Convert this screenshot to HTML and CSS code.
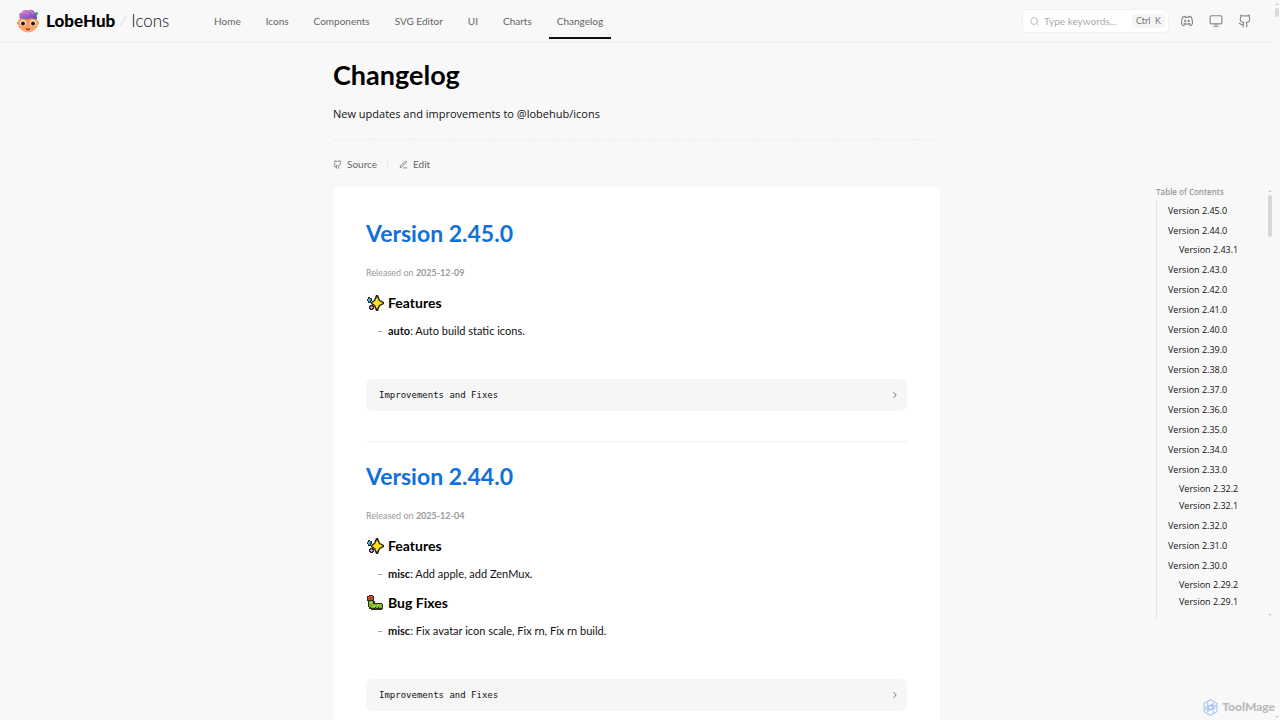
FILE: index.html
```
<!DOCTYPE html>
<html lang="en">
<head>
    <meta charset="UTF-8">
    <meta name="viewport" content="width=device-width, initial-scale=1.0">
    <title>Changelog - LobeHub Icons</title>
    <link rel="stylesheet" href="styles.css">
</head>
<body>
    <!-- shared icons -->
    <svg class="sprite" aria-hidden="true">
        <symbol id="github" viewBox="0 0 24 24">
            <path d="M15 22v-4a4.8 4.8 0 0 0-1-3.5c3 0 6-2 6-5.5.08-1.25-.27-2.48-1-3.5.28-1.15.28-2.35 0-3.5 0 0-1 0-3 1.5-2.64-.5-5.36-.5-8 0C6 2 5 2 5 2c-.3 1.15-.3 2.35 0 3.5A5.403 5.403 0 0 0 4 9c0 3.500 3 5.500 6 5.500-.39.49-.68 1.050-.85 1.650-.17.6-.22 1.230-.15 1.850v4"/>
            <path d="M9 18c-4.510 2-5-2-7-2"/>
        </symbol>
        <symbol id="sparkles" viewBox="0 0 18 18">
            <path d="M1 5h1V3h2v1h2v3H5v2H2V7H1z" fill="#223338"/>
            <path d="M2 5h1V4h1v1h1v1H4v2H3V7H2z" fill="#3fb5cd"/>
            <path d="M4 11h3v1h1v3H7v1H4v-1H3v-3h1z" fill="#36222b"/>
            <path d="M5 12h1v1h1v1H6v1H5v-1H4v-1h1z" fill="#f29abb"/>
            <path d="M10 1h2l2 5 4 2v2l-4 2-2 5h-2l-2-5-3-2V8l3-2z" fill="#26240f"/>
            <path d="M11 3l2 4 4 2-4 2-2 4-2-4-3-2 3-2z" fill="#ffdf26"/>
        </symbol>
        <symbol id="bug" viewBox="0 0 18 18">
            <path d="M3 1h4v1h1v5h1v2h7v1h1v5h-1v1H5v-1H3v-2H2V7H1V2h2z" fill="#28301a"/>
            <path d="M3 2h4v4H2V3h1z" fill="#d94430"/>
            <path d="M3 7h4v3h9v4H5v-1H3z" fill="#79b52d"/>
            <path d="M4 8h2v2H4zM7 11h2v2H7zM11 11h3v1h-3z" fill="#a7d843"/>
            <path d="M4 4h1v1H4zM9 13h1v1H9zM12 13h1v1h-1z" fill="#28301a"/>
        </symbol>
    </svg>

    <div class="app">
        <header class="header">
            <a class="logo" href="#">
                <svg class="logo-face" viewBox="0 0 44 48">
                    <defs>
                        <linearGradient id="hair" x1="0" y1="0" x2="1" y2="1">
                            <stop offset="0" stop-color="#e979b4"/>
                            <stop offset=".5" stop-color="#9a62c9"/>
                            <stop offset="1" stop-color="#5d43a8"/>
                        </linearGradient>
                        <linearGradient id="skin" x1="0" y1="0" x2="0" y2="1">
                            <stop offset="0" stop-color="#f3804f"/>
                            <stop offset="1" stop-color="#ffb07a"/>
                        </linearGradient>
                    </defs>
                    <circle cx="4" cy="28" r="4" fill="#f4935c"/>
                    <circle cx="40" cy="28" r="4" fill="#f4935c"/>
                    <ellipse cx="22" cy="29" rx="20" ry="18" fill="url(#skin)"/>
                    <path d="M5 14c-2-5 1-8 5-7 1-5 7-6 11-4 5-3 13-2 14 4 4 0 6 4 4 8 2 2 1 5-1 6-5-3-11-3-16-1-5 1-10 0-14-1-3 0-4-2-3-5z" fill="url(#hair)"/>
                    <path d="M10 9c4-4 10-3 12 2M23 5c4-2 8 1 8 5" fill="none" stroke="#e79ad0" stroke-width="2"/>
                    <circle cx="39" cy="9" r="3" fill="#4d9b62"/>
                    <circle cx="12" cy="28" r="7" fill="#fff3e0" stroke="#f6a63c" stroke-width="2"/>
                    <circle cx="32" cy="28" r="7" fill="#fff3e0" stroke="#f6a63c" stroke-width="2"/>
                    <circle cx="12" cy="29" r="4" fill="#26130e"/>
                    <circle cx="32" cy="29" r="4" fill="#26130e"/>
                    <path d="M17 38q5 2 10 0-1 5-5 5t-5-5z" fill="#b83a2d"/>
                </svg>
                <span class="logo-name">LobeHub</span>
                <svg class="logo-slash" viewBox="0 0 10 16"><path d="M2 13L8 3"/></svg>
                <span class="logo-product">Icons</span>
            </a>

            <nav class="nav">
                <a href="#">Home</a>
                <a href="#">Icons</a>
                <a href="#">Components</a>
                <a href="#">SVG Editor</a>
                <a href="#">UI</a>
                <a href="#">Charts</a>
                <a href="#" class="active">Changelog</a>
            </nav>

            <label class="search">
                <svg class="icon" viewBox="0 0 24 24"><circle cx="11" cy="11" r="9"/><path d="M18 18l4 4"/></svg>
                <input type="text" placeholder="Type keywords..." aria-label="Search">
                <kbd>Ctrl&nbsp; K</kbd>
            </label>

            <div class="actions">
                <a href="#" aria-label="Discord">
                    <svg class="icon" viewBox="0 0 24 24">
                        <path d="M8 12a1 1 0 1 0 2 0 1 1 0 0 0-2 0M14 12a1 1 0 1 0 2 0 1 1 0 0 0-2 0M15.500 17c0 1 1.500 3 2 3 1.500 0 2.833-1.667 3.500-3 .667-1.667.5-5.833-1.500-11.500-1.457-1.015-3-1.340-4.500-1.500l-.972 1.923a11.913 11.913 0 0 0-4.053 0L9 4c-1.500.16-3.043.485-4.500 1.500-2 5.667-2.167 9.833-1.500 11.500.667 1.333 2 3 3.500 3 .5 0 2-2 2-3M7 16.500c3.500 1 6.500 1 10 0"/>
                    </svg>
                </a>
                <button type="button" aria-label="Theme">
                    <svg class="icon" viewBox="0 0 24 24"><rect x="2" y="3" width="20" height="14" rx="2"/><path d="M8 21h8M12 17v4"/></svg>
                </button>
                <a href="#" aria-label="GitHub"><svg class="icon"><use href="#github"/></svg></a>
            </div>
        </header>

        <main class="main">
            <article class="content">
                <h1>Changelog</h1>
                <p class="intro">New updates and improvements to @lobehub/icons</p>
                <div class="links">
                    <a href="#"><svg class="icon"><use href="#github"/></svg>Source</a>
                    <span class="split"></span>
                    <a href="#"><svg class="icon" viewBox="0 0 24 24"><path d="M12 21h9M16.500 3.500a2.120 2.120 0 0 1 3 3L7 19l-4 1 1-4z"/></svg>Edit</a>
                </div>

                <div class="card">
                    <section>
                        <h2><a href="#">Version 2.45.0</a></h2>
                        <p class="released">Released on <strong>2025-12-09</strong></p>
                        <h3><svg><use href="#sparkles"/></svg>Features</h3>
                        <ul>
                            <li><strong>auto</strong>: Auto build static icons.</li>
                        </ul>
                        <details>
                            <summary>Improvements and Fixes<svg class="icon" viewBox="0 0 24 24"><path d="M9 6l6 6-6 6"/></svg></summary>
                        </details>
                    </section>
                    <hr>
                    <section>
                        <h2><a href="#">Version 2.44.0</a></h2>
                        <p class="released">Released on <strong>2025-12-04</strong></p>
                        <h3><svg><use href="#sparkles"/></svg>Features</h3>
                        <ul>
                            <li><strong>misc</strong>: Add apple, add ZenMux.</li>
                        </ul>
                        <h3><svg><use href="#bug"/></svg>Bug Fixes</h3>
                        <ul>
                            <li><strong>misc</strong>: Fix avatar icon scale, Fix rn, Fix rn build.</li>
                        </ul>
                        <details>
                            <summary>Improvements and Fixes<svg class="icon" viewBox="0 0 24 24"><path d="M9 6l6 6-6 6"/></svg></summary>
                        </details>
                    </section>
                </div>
            </article>

            <aside class="toc">
                <h4>Table of Contents</h4>
                <ul>
                    <li><a href="#">Version 2.45.0</a></li>
                    <li><a href="#">Version 2.44.0</a>
                        <ul>
                            <li><a href="#">Version 2.43.1</a></li>
                        </ul>
                    </li>
                    <li><a href="#">Version 2.43.0</a></li>
                    <li><a href="#">Version 2.42.0</a></li>
                    <li><a href="#">Version 2.41.0</a></li>
                    <li><a href="#">Version 2.40.0</a></li>
                    <li><a href="#">Version 2.39.0</a></li>
                    <li><a href="#">Version 2.38.0</a></li>
                    <li><a href="#">Version 2.37.0</a></li>
                    <li><a href="#">Version 2.36.0</a></li>
                    <li><a href="#">Version 2.35.0</a></li>
                    <li><a href="#">Version 2.34.0</a></li>
                    <li><a href="#">Version 2.33.0</a>
                        <ul>
                            <li><a href="#">Version 2.32.2</a></li>
                            <li><a href="#">Version 2.32.1</a></li>
                        </ul>
                    </li>
                    <li><a href="#">Version 2.32.0</a></li>
                    <li><a href="#">Version 2.31.0</a></li>
                    <li><a href="#">Version 2.30.0</a>
                        <ul>
                            <li><a href="#">Version 2.29.2</a></li>
                            <li><a href="#">Version 2.29.1</a></li>
                        </ul>
                    </li>
                </ul>
                <div class="scroll toc-scroll"><i class="up"></i><b></b><i class="down"></i></div>
            </aside>
        </main>

        <div class="scroll page-scroll"><i class="up"></i><b></b><i class="down"></i></div>

        <div class="watermark">
            <svg viewBox="0 0 24 24">
                <path d="M12 1l9 5v12l-9 5-9-5V6z"/>
                <circle cx="12" cy="12" r="3"/>
                <path d="M8 3v8l4-2 7 4M16 21v-8l-4 2-7-4M3 13l6 3v-5l8-5M21 11l-6-3v5l-8 5"/>
            </svg>
            ToolMage
        </div>
    </div>
</body>
</html>
```

FILE: styles.css
```
* {
    box-sizing: border-box;
}

body {
    margin: 0;
    font-family: Lato, "Open Sans", sans-serif;
    font-size: 11px;
    line-height: 16px;
    background: #f8f8f8;
    color: #111;
}

a {
    color: inherit;
    text-decoration: none;
}

h1, h2, h3, h4, p, ul {
    margin: 0;
    padding: 0;
}

ul {
    list-style: none;
}

.sprite {
    position: absolute;
    width: 0;
    height: 0;
}

.icon {
    width: 14px;
    height: 14px;
    display: block;
    flex: none;
    fill: none;
    stroke: currentColor;
    stroke-width: 2;
    stroke-linecap: round;
    stroke-linejoin: round;
}

.app {
    position: relative;
    height: 100vh;
    overflow: hidden;
}

/* header */
.header {
    display: flex;
    align-items: center;
    height: 43px;
    padding: 0 22px 0 17px;
    border-bottom: 1px solid #efefef;
    margin-right: 6px;
}

.logo {
    display: flex;
    align-items: center;
    width: 189px;
    line-height: 24px;
}

.logo-face {
    width: 22px;
    height: 24px;
    margin-right: 7px;
}

.logo-name {
    font-size: 17px;
    font-weight: 900;
    color: #000;
}

.logo-slash {
    width: 10px;
    height: 16px;
    margin: 0 3px;
    fill: none;
    stroke: #ddd;
}

.logo-product {
    font-size: 17px;
    font-weight: 300;
}

.nav {
    display: flex;
    gap: 9px;
    flex: 1;
    color: #666;
}

.nav a {
    display: flex;
    align-items: center;
    height: 36px;
    padding: 2px 8px 0;
    border-bottom: 2px solid transparent;
    font-size: 10px;
}

.nav .active {
    border-color: #111;
}

.search {
    display: flex;
    align-items: center;
    width: 147px;
    height: 24px;
    padding: 0 3px 0 7px;
    background: #fff;
    border: 1px solid #f0f0f0;
    border-radius: 5px;
    color: #aaa;
}

.search .icon {
    width: 9px;
    height: 9px;
}

.search input {
    flex: 1;
    min-width: 0;
    padding: 0;
    margin-left: 5px;
    border: 0;
    outline: 0;
    background: none;
    font: inherit;
    font-size: 10px;
}

.search input::placeholder {
    color: #aaa;
}

.search kbd {
    width: 33px;
    height: 14px;
    line-height: 14px;
    text-align: center;
    border-radius: 3px;
    background: #f6f6f6;
    color: #777;
    font-family: inherit;
    font-size: 9px;
}

.actions {
    display: flex;
    gap: 15px;
    margin-left: 11px;
    color: #888;
}

.actions button {
    padding: 0;
    border: 0;
    background: none;
    color: inherit;
}

/* page body */
.main {
    display: grid;
    grid-template-columns: 1fr minmax(0, 607px) 1fr;
    margin-right: 7px;
}

.content {
    grid-column: 2;
}

h1 {
    margin-top: 16px;
    font-size: 27px;
    line-height: 32px;
    color: #000;
}

.intro {
    margin-top: 15px;
    padding-bottom: 17px;
    border-bottom: 1px dashed #ececec;
    font-family: "Open Sans", sans-serif;
}

.links {
    display: flex;
    align-items: center;
    margin: 16px 0 15px;
    color: #666;
    font-size: 10px;
}

.links a {
    display: flex;
    align-items: center;
    gap: 5px;
}

.links .icon {
    width: 9px;
    height: 9px;
}

.split {
    width: 1px;
    height: 9px;
    margin: 0 11px 0 10px;
    background: #e8e8e8;
}

.card {
    padding: 32px 33px;
    background: #fff;
    border-radius: 6px;
}

h2 {
    font-size: 23px;
    line-height: 28px;
    color: #1071dc;
}

.released {
    margin-top: 20px;
    font-size: 9px;
    line-height: 12px;
    color: #999;
}

h3 {
    display: flex;
    align-items: center;
    gap: 4px;
    margin-top: 14px;
    font-size: 14px;
    line-height: 20px;
    color: #000;
}

h3 svg {
    width: 18px;
    height: 18px;
}

.card ul {
    margin-top: 10px;
}

.card ul + h3 {
    margin-top: 11px;
}

.card li {
    display: flex;
    white-space: pre;
}

.card li::before {
    content: "–";
    width: 11px;
    margin-left: 11px;
    color: #999;
}

details {
    margin-top: 40px;
    background: #f6f6f6;
    border-radius: 6px;
}

summary {
    display: flex;
    align-items: center;
    justify-content: space-between;
    height: 32px;
    padding: 0 7px 0 13px;
    font-family: "DejaVu Sans Mono", monospace;
    font-size: 9px;
}

summary .icon {
    width: 10px;
    height: 10px;
    color: #555;
}

hr {
    height: 1px;
    margin: 30px 0 20px;
    border: 0;
    background: #f0f0f0;
}

/* table of contents */
.toc {
    position: relative;
    grid-column: 3;
    justify-self: end;
    align-self: start;
    width: 117px;
    margin-top: 143px;
    font-family: "Open Sans", sans-serif;
    font-size: 9px;
    line-height: 20px;
}

.toc h4 {
    font-size: 8px;
    font-weight: 600;
    line-height: 12px;
    color: #999;
}

.toc > ul {
    height: 418px;
    margin-top: 2px;
    padding: 1px 0 0 11px;
    border-left: 1px solid #e2e2e2;
}

.toc li a {
    display: block;
}

.toc li ul {
    padding-left: 11px;
    margin-bottom: 2px;
    line-height: 17px;
}

/* scrollbars */
.scroll {
    position: absolute;
    display: flex;
    flex-direction: column;
    align-items: center;
    width: 4px;
}

.scroll b {
    width: 4px;
    margin: 3px 0 auto;
    border-radius: 2px;
    background: #d8d8d8;
}

.scroll .up,
.scroll .down {
    border: 2px solid transparent;
}

.scroll .up {
    border-top: 0;
    border-bottom-color: #ccc;
}

.scroll .down {
    border-bottom: 0;
    border-top-color: #ccc;
}

.toc-scroll {
    top: 4px;
    right: 1px;
    bottom: 2px;
}

.toc-scroll b {
    height: 42px;
}

.page-scroll {
    top: 3px;
    right: 1px;
    bottom: 2px;
}

.page-scroll b {
    height: 9px;
}

.watermark {
    position: absolute;
    right: 5px;
    bottom: 4px;
    display: flex;
    align-items: center;
    gap: 3px;
    font-size: 12px;
    line-height: 18px;
    font-weight: 900;
    color: #bbb;
}

.watermark svg {
    width: 17px;
    height: 17px;
    fill: none;
    stroke: #a9c4f5;
    stroke-width: 1.5;
}
```
